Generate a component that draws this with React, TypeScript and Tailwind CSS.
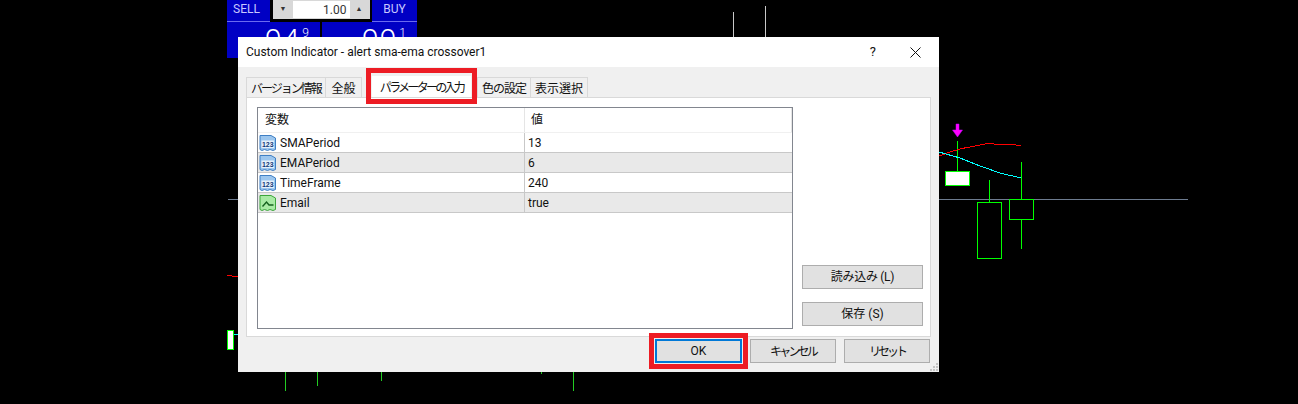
const FONT = "font-['Roboto','Noto_Sans_CJK_JP',sans-serif]";
const KANA = "whitespace-nowrap font-['Noto_Sans_CJK_JP',sans-serif]";

const params = [
  { name: "SMAPeriod", value: "13", kind: "num" },
  { name: "EMAPeriod", value: "6", kind: "num" },
  { name: "TimeFrame", value: "240", kind: "num" },
  { name: "Email", value: "true", kind: "bool" },
];

function ParamIcon({ kind }: { kind: string }) {
  const green = kind === "bool";
  return (
    <svg width="18" height="18" viewBox="0 0 18 18" className="ml-[1px] shrink-0">
      <path
        d="M1 1.5 H12 L16.5 4 V15.5 L14 16.5 L11 15.5 L8.5 16.5 L5.5 15.5 L3 16.5 L1 15.5 Z"
        fill={green ? "#a8eaa4" : "#9cc6ee"}
        stroke={green ? "#3ca53c" : "#3f7fc4"}
      />
      {green ? (
        <path d="M3.5 12.5 L7.5 8 L10 11 H14.5" fill="none" stroke="#14601e" strokeWidth="1.4" />
      ) : (
        <>
          <rect x="2.5" y="6.5" width="12.5" height="7.5" fill="#e6f1fb" />
          <text x="8.8" y="12.6" textAnchor="middle" fontSize="7" fontWeight="700" fontFamily="Liberation Sans" fill="#123a78">
            123
          </text>
        </>
      )}
    </svg>
  );
}

function Chart() {
  return (
    <svg width="1298" height="404" className="absolute left-0 top-0" shapeRendering="crispEdges">
      <path d="M228 199.5 H238 M939 199.5 H1188" stroke="#6d7b8f" />
      <path d="M733.5 12 V37 M765.5 6 V37" stroke="#c8c8c8" />
      <path d="M285.5 372 V391 M317.5 372 V386 M381.5 372 V381 M541.5 372 V374 M573.5 372 V391" stroke="#22cc22" />
      <g fill="none" stroke="#00ff00">
        <path d="M957.5 141 V171 M989.5 180 V202 M1021.5 162 V199 M1021.5 219 V249" />
        <rect x="945.5" y="171.5" width="24" height="14" fill="#ffffff" />
        <rect x="977.5" y="202.5" width="24" height="56" />
        <rect x="1009.5" y="199.5" width="24" height="20" />
        <rect x="227.5" y="330.5" width="6" height="19" fill="#ffffff" />
      </g>
      <path d="M234 334.5 H238" stroke="#00ffff" />
      <path d="M227 275 L232 276 H238" stroke="#ff0000" fill="none" />
      <polyline points="939,156 950,152 962,148.5 975,146 988,143.5 1000,144.5 1011,144.5 1021,145.5" fill="none" stroke="#ff0000" />
      <polyline points="939,152 960,158 980,166 1000,173 1021,178" fill="none" stroke="#00ffff" />
      <path d="M956 124 H959 V130 H962.5 L957.5 137 L952.5 130 H956 Z" fill="#ff00ff" stroke="#c000ff" strokeWidth="0.5" shapeRendering="auto" />
    </svg>
  );
}

function TradePanel() {
  return (
    <div className="absolute left-[227px] top-0 flex h-[56px] w-[190px] flex-col text-white font-['Roboto',sans-serif]">
      <div className="flex h-[22px] justify-between">
        <div className="flex h-[22px] w-[43px] items-center justify-center border-b border-[#6a6af0] bg-[#0000c4] pb-[3px] pr-[4px] text-[12px] text-[#c8c8ff]">SELL</div>
        <div className="flex h-[19px] w-[97px] items-stretch bg-[#d8d8d8] p-px text-[12px] text-[#333333]">
          <div className="flex w-[19px] items-center justify-center text-[7px]">▼</div>
          <div className="flex flex-1 items-center justify-end bg-white pr-[3px]">1.00</div>
          <div className="flex w-[19px] items-center justify-center text-[7px]">▲</div>
        </div>
        <div className="flex h-[22px] w-[45px] items-center justify-center border-b border-[#6a6af0] bg-[#0000c4] pb-[3px] text-[12px] text-[#c8c8ff]">BUY</div>
      </div>
      <div className="flex flex-1 gap-[2px]">
        <div className="flex w-[93px] justify-end gap-[2px] overflow-hidden bg-[#0000c4] pr-[10px] text-[30px] font-light leading-[36px] tracking-[1px]">
          94<span className="text-[12px] leading-[22px]">9</span>
        </div>
        <div className="flex flex-1 justify-end gap-[2px] overflow-hidden bg-[#0000c4] pr-[10px] text-[30px] font-light leading-[36px] tracking-[1px]">
          99<span className="text-[12px] leading-[22px]">1</span>
        </div>
      </div>
    </div>
  );
}

function GrayButton({ label, className = "" }: { label: string; className?: string }) {
  return (
    <button className={`flex h-[24px] items-center justify-center border border-[#adadad] bg-[#e1e1e1] text-[12px] text-[#111111] ${className}`}>
      {label}
    </button>
  );
}

function Dialog() {
  return (
    <div className={`absolute left-[238px] top-[37px] flex h-[335px] w-[701px] flex-col bg-[#f0f0f0] text-[12px] text-[#111111] ${FONT}`}>
      {/* Title bar */}
      <div className="flex h-[30px] shrink-0 items-center bg-white pl-[8px]">
        <span className="text-[12px]">Custom Indicator - alert sma-ema crossover1</span>
        <span className="ml-auto mr-[34px] text-[13px]">?</span>
        <svg width="11" height="11" viewBox="0 0 11 11" className="mr-[18px]">
          <path d="M0.5 0.5 L10.5 10.5 M10.5 0.5 L0.5 10.5" stroke="#111111" />
        </svg>
      </div>

      {/* Tabs */}
      <div className="ml-[8px] mt-[9px] flex h-[21px] shrink-0 items-end">
        <div className={`flex h-[20px] w-[80px] items-center justify-center border border-b-0 border-[#d9d9d9] bg-[#f0f0f0] tracking-[-2px] ${KANA}`}>バージョン情報</div>
        <div className={`flex h-[20px] w-[36px] items-center justify-center border border-l-0 border-b-0 border-[#d9d9d9] bg-[#f0f0f0] ${KANA}`}>全般</div>
        <div className={`relative ml-[10px] flex h-[21px] w-[99px] items-center justify-center bg-white tracking-[-2.7px] ${KANA}`}>
          パラメーターの入力
          <div className="absolute -inset-x-[6px] -bottom-[7px] -top-[8px] border-[5px] border-[#ed1c24]" />
        </div>
        <div className={`ml-[6px] flex h-[20px] w-[54px] items-center justify-center border border-b-0 border-[#d9d9d9] bg-[#f0f0f0] tracking-[-1px] ${KANA}`}>色の設定</div>
        <div className={`flex h-[20px] w-[57px] items-center justify-center border border-l-0 border-b-0 border-[#d9d9d9] bg-[#f0f0f0] ${KANA}`}>表示選択</div>
      </div>

      {/* Panel */}
      <div className="mx-[8px] flex h-[240px] shrink-0 border border-[#d9d9d9] bg-white pl-[10px] pt-[9px]">
        <div className="h-[222px] w-[536px] border border-[#82868f]">
          <div className="flex h-[25px] border-b border-[#f0f0f0]">
            <div className="w-[267px] border-r border-[#e5e5e5] pl-[7px] leading-[25px]">変数</div>
            <div className="flex-1 border-r border-[#e5e5e5] pl-[6px] leading-[25px]">値</div>
          </div>
          {params.map((p, i) => (
            <div key={p.name} className={`flex h-[20px] border-b border-[#c8c8c8] ${i % 2 === 1 ? "bg-[#e9e9e9]" : "bg-white"}`}>
              <div className="flex w-[267px] items-center gap-[3px] border-r border-[#c8c8c8]">
                <ParamIcon kind={p.kind} />
                {p.name}
              </div>
              <div className="flex flex-1 items-center pl-[3px]">{p.value}</div>
            </div>
          ))}
        </div>
        <div className="ml-[9px] flex flex-col justify-end gap-[13px] pb-[10px]">
          <GrayButton label="読み込み (L)" className="w-[121px] tracking-[-0.3px]" />
          <GrayButton label="保存 (S)" className="w-[121px]" />
        </div>
      </div>

      {/* Footer */}
      <div className="relative flex flex-1 items-start gap-[8px] pl-[417px] pt-[2px]">
        <div className="relative">
          <button className="flex h-[24px] w-[87px] items-center justify-center border-2 border-[#0078d7] bg-[#e1e1e1] text-[12px]">OK</button>
          <div className="absolute -inset-x-[6px] -inset-y-[6px] border-[5px] border-[#ed1c24]" />
        </div>
        <GrayButton label="キャンセル" className={`w-[86px] tracking-[-2.8px] ${KANA}`} />
        <GrayButton label="リセット" className={`w-[86px] tracking-[-3px] ${KANA}`} />
        <svg width="9" height="9" viewBox="0 0 9 9" className="absolute bottom-[1px] right-[1px]" shapeRendering="crispEdges">
          <path d="M7 1h2v2H7z M4 4h2v2H4z M7 4h2v2H7z M1 7h2v2H1z M4 7h2v2H4z M7 7h2v2H7z" fill="#c4c4c4" />
        </svg>
      </div>
    </div>
  );
}

export default function App() {
  return (
    <div className="relative h-[404px] w-[1298px] overflow-hidden bg-black">
      <Chart />
      <TradePanel />
      <Dialog />
    </div>
  );
}
